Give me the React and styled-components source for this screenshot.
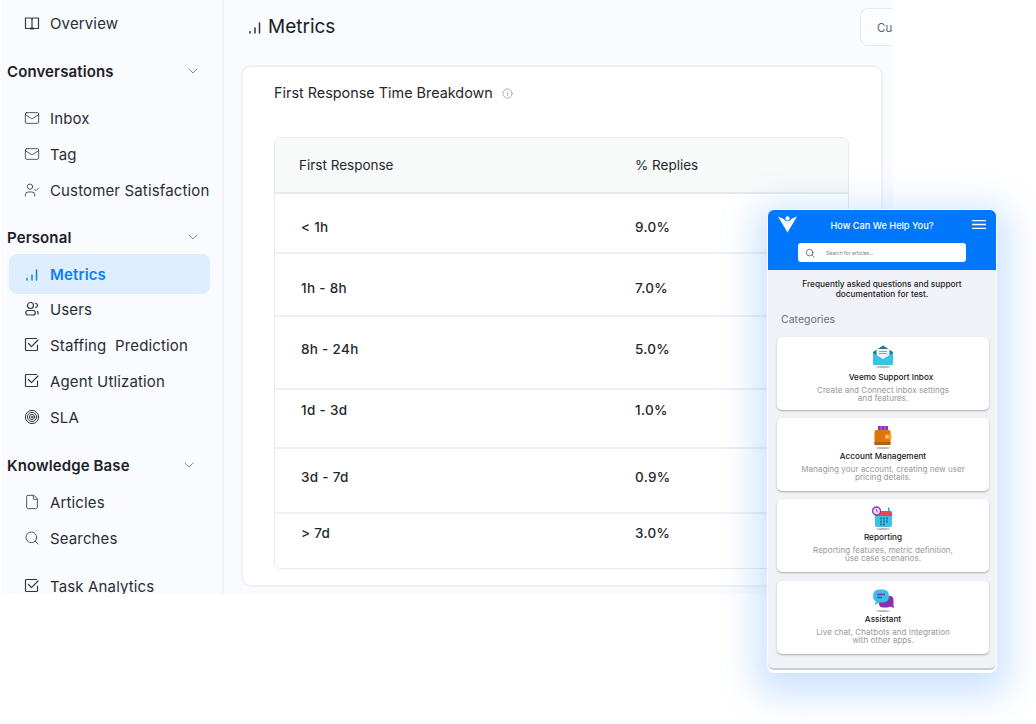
import React from "react";
import styled, { createGlobalStyle } from "styled-components";
import { ChevronDown, Mail, UserCheck, File, Search, Info } from "lucide-react";

const Global = createGlobalStyle`
  html, body { margin: 0; padding: 0; background: #fff; }
  #root { width: 1036px; height: 724px; position: relative; overflow: hidden; font-family: Inter, "Liberation Sans", sans-serif; }
`;
const Frame = styled.div`
  width: 893px; height: 594px; display: flex; overflow: hidden; background: #f9fbff;
`;
const Side = styled.aside`
  width: 224px; flex: none; box-sizing: border-box; height: 594px; overflow: hidden;
  background: #f9fbff; border-right: 2px solid #f1f3f7; border-left: 1px solid #fff;
  padding-left: 6px; display: flex; flex-direction: column;
`;
const Group = styled.div`
  flex: none; display: flex; align-items: center; justify-content: space-between; height: 24px;
  margin-top: ${p => p.$top}px; margin-bottom: ${p => p.$bottom}px; padding-right: ${p => p.$pr || 21}px;
  font-size: 15px; font-weight: 600; color: #1d2126; letter-spacing: .12px;
  svg { color: #6f767e; }
`;
const Item = styled.div`
  flex: none; display: flex; align-items: center; gap: 10px; box-sizing: border-box; width: 201px; height: ${p => p.$active ? 40 : 36}px;
  margin-left: 2px; padding-left: 15px; margin-top: ${p => p.$top || 0}px; border-radius: 8px;
  background: ${p => p.$active ? "#deeefe" : "transparent"};
  color: ${p => p.$active ? "#0b80f0" : "#2a2e33"};
  font-size: 15px; font-weight: ${p => p.$active ? 600 : 400}; letter-spacing: .14px; white-space: pre;
  svg { flex: none; color: ${p => p.$active ? "#0b80f0" : "#34383d"}; }
`;
const Main = styled.main`
  flex: 1; min-width: 0; padding: 0 0 0 17px; display: flex; flex-direction: column;
`;
const Head = styled.div`
  height: 65px; flex: none; display: flex; align-items: flex-start; justify-content: space-between;
`;
const Title = styled.h1`
  margin: 14px 0 0 6px; display: flex; align-items: center; gap: 5px;
  font-size: 19px; line-height: 26px; font-weight: 400; color: #1b1f24;
  svg { color: #32363b; }
`;
const Custom = styled.div`
  width: 33px; height: 38px; box-sizing: border-box; margin-top: 8px; border: 1px solid #e9ebef; border-right: 0;
  border-radius: 8px 0 0 8px; background: #fcfdff; padding: 11px 0 0 16px; overflow: hidden; white-space: nowrap;
  font-size: 11.5px; line-height: 16px; color: #5e656e;
`;
const Card = styled.section`
  width: 642px; height: 522px; box-sizing: border-box; background: #fff; border: 2px solid #f0f1f3; border-radius: 10px;
  padding: 16px 32px 0 31px;
`;
const CardTitle = styled.h2`
  margin: 0; display: flex; align-items: center; gap: 9px; font-size: 14.4px; line-height: 20px; font-weight: 400; color: #24282d;
  svg { color: #6d7f91; }
`;
const Table = styled.div`
  margin-top: 34px; width: 575px; height: 432px; box-sizing: border-box; border: 1px solid #e9ebed; border-radius: 7px; overflow: hidden;
`;
const HeadRow = styled.div`
  height: 56px; box-sizing: border-box; display: grid; grid-template-columns: 336px 1fr; padding-left: 24px; align-items: center;
  background: #f8f9f9; border-bottom: 2px solid #e6e8ea; font-size: 13.5px; color: #24282d;
`;
const Row = styled.div`
  height: ${p => p.$h}px; box-sizing: border-box; display: grid; grid-template-columns: 334px 1fr; padding: ${p => p.$pt}px 0 0 26px;
  border-bottom: ${p => p.$last ? 0 : "2px solid #eff0f2"}; font-size: 13.5px; line-height: 18px; font-weight: 500; color: #25292e; letter-spacing: .3px;
`;
const Glow = styled.div`
  position: absolute; left: 768px; top: 210px; width: 228px; height: 462px; border-radius: 6px; background: #fff;
  box-shadow: 0 0 0 1px #fff, 0 10px 36px 12px rgba(70, 150, 255, .28);
`;
const Widget = styled.div`
  position: absolute; left: 768px; top: 210px; width: 228px; height: 460px; box-sizing: border-box; border-radius: 6px;
  background: #f0f2f8; border-bottom: 2px solid #c9cbd0; overflow: hidden;
`;
const WHead = styled.div`
  height: 60px; box-sizing: border-box; background: #0177fe; display: flex; flex-direction: column; align-items: center; padding-top: 5px;
`;
const WTop = styled.div`
  width: 100%; box-sizing: border-box; padding: 0 10px; display: flex; align-items: center; justify-content: space-between; height: 18px; color: #fff;
  font-size: 9.2px; font-weight: 500;
  span { margin: 2px 5px 0 0; }
`;
const WSearch = styled.div`
  margin-top: 10px; width: 168px; height: 19px; box-sizing: border-box; border-radius: 3px; background: #fff; display: flex; align-items: center; gap: 11px;
  padding-left: 7px; font-size: 5px; color: #77797d; svg { color: #333; }
`;
const WIntro = styled.p`
  margin: 9px 0 0; text-align: center; font-size: 8.3px; line-height: 10px; font-weight: 500; color: #1e1f23;
`;
const WLabel = styled.div`
  margin: 14px 0 0 13px; font-size: 10.5px; line-height: 14px; color: #6d7075;
`;
const WList = styled.div`
  margin: 10px 7px 0 9px; display: flex; flex-direction: column; gap: 8px;
`;
const WCard = styled.div`
  height: 73px; box-sizing: border-box; border-radius: 5px; background: #fff; box-shadow: 0 1px 2px rgba(0,0,0,.3); padding-top: 7px;
  display: flex; flex-direction: column; align-items: center; text-align: center;
  &:last-child { margin-top: 1px; }
`;
const WName = styled.div`
  font-size: 8.2px; line-height: 10px; margin-top: ${p => p.$offset ? 4 : 2}px; margin-left: ${p => p.$offset ? 16 : 0}px; color: #15161a; font-weight: 450;
`;
const WDesc = styled.div`
  font-size: 8.1px; line-height: 8px; margin-top: 4px; color: #96989c; white-space: pre-line;
`;

const Ic = ({ children, size = 16, sw = 1.2 }) => (
  <svg width={size} height={size} viewBox="0 0 16 16" fill="none" stroke="currentColor" strokeWidth={sw} strokeLinecap="round" strokeLinejoin="round">{children}</svg>
);
const BookIc = () => <Ic><path d="M1.500 3h5q1.500 0 1.500 1.200Q8 3 9.500 3h5v10.500h-13Z" /><path d="M8 4v9.500" /><path d="M6.500 13.500h3" strokeWidth="1.800" /></Ic>;
const Bars = () => <Ic sw={1.5}><path d="M3 14v-1.500M8 14V9M12.500 14V4" /></Ic>;
const CheckIc = () => <Ic><path d="M13.500 8v4.500a1 1 0 0 1-1 1h-10a1 1 0 0 1-1-1v-10a1 1 0 0 1 1-1h10" /><path d="M4.500 6.500l3 3.200 6.500-6.700" /></Ic>;
const UsersIc = () => <Ic><circle cx="6.500" cy="4.500" r="3" /><rect x="1.800" y="9.500" width="9.500" height="4.500" rx="2.250" /><path d="M11.500 2.500a2 2 0 0 1 0 4M13.500 10.500q1 1 .5 2.500" /></Ic>;
const TargetIc = () => <Ic sw={1}><circle cx="8" cy="8" r="6.600" /><circle cx="8" cy="8" r="4.600" /><circle cx="8" cy="8" r="2.600" /><circle cx="8" cy="8" r=".8" /></Ic>;
const Burger = () => <svg width="14" height="9" viewBox="0 0 14 9" stroke="#fff" strokeWidth="1.300"><path d="M0 .7h14M0 4.500h14M0 8.300h14" /></svg>;

const Logo = () => (
  <svg width="19" height="17" viewBox="0 0 18 16" fill="#fff">
    <circle cx="9" cy="2.200" r="2" />
    <path d="M0 .5 L5 2.500 Q7 5 9 5 Q11 5 13 2.500 L18 .5 L9 15.500 Z" />
  </svg>
);
const Shade = () => <ellipse cx="12" cy="23" rx="7" ry="1" fill="#b9b9b9" />;
const InboxArt = () => (
  <svg width="24" height="24" viewBox="0 0 24 24">
    <path d="M2 8 L12 1.500 L22 8 V12 H2Z" fill="#16808f" />
    <rect x="5.500" y="5" width="13" height="10" fill="#f0f2f5" />
    <path d="M8 7.500h8M8 9.500h8" stroke="#8fa5ad" strokeWidth="1" />
    <path d="M2 9 L12 15 L22 9 V20 Q22 21 21 21 H3 Q2 21 2 20Z" fill="#36c5e3" />
    <Shade />
  </svg>
);
const WalletArt = () => (
  <svg width="24" height="24" viewBox="0 0 24 24">
    <rect x="7" y="1" width="10" height="8" fill="#8e36b5" />
    <path d="M10 1v8M14 1v8" stroke="#b768d8" strokeWidth="1" />
    <rect x="3.500" y="5" width="16" height="15" rx="2" fill="#de7508" />
    <rect x="3.500" y="17" width="16" height="3" fill="#b85f05" />
    <rect x="14" y="9.500" width="6.500" height="4.500" fill="#f8a526" />
    <circle cx="16" cy="11.700" r="1" fill="#fff3a8" />
    <Shade />
  </svg>
);
const CalendarArt = () => (
  <svg width="24" height="24" viewBox="0 0 24 24">
    <rect x="4" y="5" width="17" height="16" rx="2" fill="#42bfe5" />
    <path d="M4 10V7q0-2 2-2h13q2 0 2 2v3Z" fill="#ee4259" />
    <g fill="#197fa8"><rect x="9" y="11.500" width="2" height="2" /><rect x="12" y="11.500" width="2" height="2" /><rect x="15" y="11.500" width="2" height="2" /><rect x="9" y="14.500" width="2" height="2" /><rect x="12" y="14.500" width="2" height="2" /><rect x="15" y="14.500" width="2" height="2" /><rect x="9" y="17.500" width="2" height="2" /><rect x="12" y="17.500" width="2" height="2" /></g>
    <circle cx="5.500" cy="5" r="4" fill="#e8d9f0" stroke="#8e36b5" strokeWidth="1.300" />
    <path d="M5.500 3v2.200l1.500 1" stroke="#8e36b5" strokeWidth=".8" fill="none" />
    <rect x="17" y="1.500" width="1.500" height="4" fill="#2aa0cf" />
    <Shade />
  </svg>
);
const ChatArt = () => (
  <svg width="24" height="24" viewBox="0 0 24 24">
    <path d="M11 8h8q3.500 0 3.500 4v5l.5 3-4-1.500q-1 1-3 1h-4q-4 0-4-4v-4q0-3.500 3-3.500Z" fill="#8a2fb0" />
    <path d="M8 1.500h4q6 0 6 6.500t-6 6.500H8.500L4 17l.8-3.500Q2 12 2 8q0-6.500 6-6.500Z" fill="#38c3e6" />
    <path d="M6 6.500h8M6 9.500h5" stroke="#8a2fb0" strokeWidth="1.500" />
    <Shade />
  </svg>
);

const cards = [
  [InboxArt, "Veemo Support Inbox", "Create and Connect inbox settings\nand features.", true],
  [WalletArt, "Account Management", "Managing your account, creating new user\npricing details."],
  [CalendarArt, "Reporting", "Reporting features, metric definition,\nuse case scenarios."],
  [ChatArt, "Assistant", "Live chat, Chatbots and Integration\nwith other apps."],
];
const rows = [
  ["< 1h", "9.0%", 60, 24],
  ["1h - 8h", "7.0%", 63, 25],
  ["8h - 24h", "5.0%", 73, 23],
  ["1d - 3d", "1.0%", 59, 11],
  ["3d - 7d", "0.9%", 65, 19],
  ["> 7d", "3.0%", 54, 10, true],
];
const I = { size: 16, strokeWidth: 1.25 };
const Chev = () => <ChevronDown size={16} strokeWidth={1.25} />;

export default function App() {
  return (
    <>
      <Global />
      <Frame>
        <Side>
          <Item $top={5}><BookIc />Overview</Item>
          <Group $top={18} $bottom={17}>Conversations<Chev /></Group>
          <Item><Mail {...I} />Inbox</Item>
          <Item><Mail {...I} />Tag</Item>
          <Item><UserCheck {...I} />Customer Satisfaction</Item>
          <Group $top={17} $bottom={5}>Personal<Chev /></Group>
          <Item $active><Bars />Metrics</Item>
          <Item $top={-3}><UsersIc />Users</Item>
          <Item><CheckIc />Staffing  Prediction</Item>
          <Item><CheckIc />Agent Utlization</Item>
          <Item><TargetIc />SLA</Item>
          <Group $top={18} $bottom={7} $pr={25}>Knowledge Base<Chev /></Group>
          <Item><File {...I} />Articles</Item>
          <Item><Search {...I} />Searches</Item>
          <Item $top={12}><CheckIc />Task Analytics</Item>
        </Side>
        <Main>
          <Head>
            <Title><Bars />Metrics</Title>
            <Custom>Custom</Custom>
          </Head>
          <Card>
            <CardTitle>First Response Time Breakdown<Info size={11} strokeWidth={1.3} /></CardTitle>
            <Table>
              <HeadRow><span>First Response</span><span>% Replies</span></HeadRow>
              {rows.map(([a, b, h, pt, last]) => (
                <Row key={a} $h={h} $pt={pt} $last={last}><span>{a}</span><span>{b}</span></Row>
              ))}
            </Table>
          </Card>
        </Main>
      </Frame>
      <Glow />
      <Widget>
        <WHead>
          <WTop><Logo /><span>How Can We Help You?</span><Burger /></WTop>
          <WSearch><Search size={10} strokeWidth={1.5} />Search for articles...</WSearch>
        </WHead>
        <WIntro>Frequently asked questions and support<br />documentation for test.</WIntro>
        <WLabel>Categories</WLabel>
        <WList>
          {cards.map(([Art, name, desc, offset]) => (
            <WCard key={name}><Art /><WName $offset={offset}>{name}</WName><WDesc>{desc}</WDesc></WCard>
          ))}
        </WList>
      </Widget>
    </>
  );
}
